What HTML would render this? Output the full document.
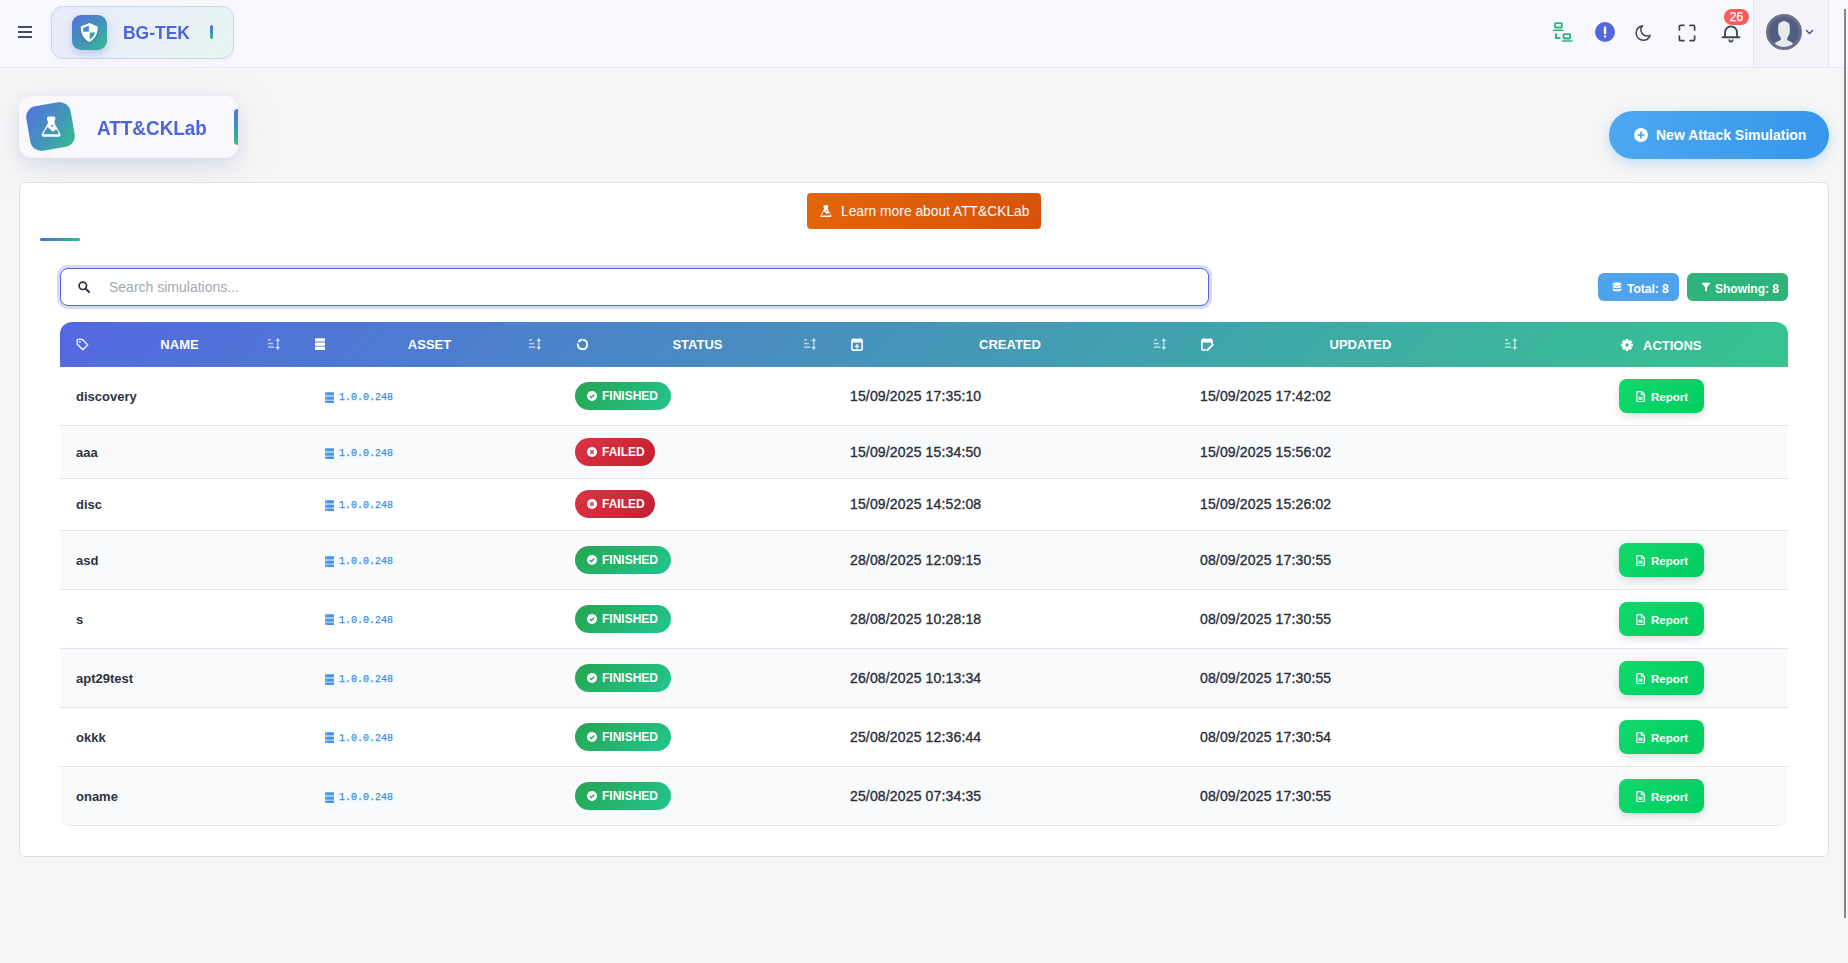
<!DOCTYPE html><html><head><meta charset="utf-8"><style>
*{box-sizing:border-box;margin:0;padding:0}
html,body{width:1848px;height:963px;overflow:hidden;background:#f6f6f6;font-family:"Liberation Sans",sans-serif;color:#333}
.a{position:absolute}
svg{display:block}
#nav{left:0;top:0;width:1848px;height:68px;background:#f9f8fe;border-bottom:1px solid #e8e8ee}
#ham i{position:absolute;left:18px;width:14px;height:2px;background:#454a5c}
#logo{left:51px;top:6px;width:183px;height:53px;border:1px solid #cdd5f5;border-radius:12px;background:linear-gradient(135deg,#e9ebfa 0%,#e8f1f6 60%,#e6f5f0 100%);box-shadow:0 1px 6px rgba(120,130,220,.08)}
#logoicon{left:20px;top:8px;width:35px;height:35px;border-radius:9px;background:linear-gradient(135deg,#5470e0 0%,#4496b8 55%,#33bf8c 100%);box-shadow:0 4px 9px rgba(84,104,224,.28)}
#logotext{left:71px;top:15px;font-size:18px;transform:scaleX(0.97);transform-origin:0 0;font-weight:bold;color:#4f64dc;line-height:22px;white-space:nowrap}
#logobar{left:158px;top:18px;width:3px;height:14px;border-radius:2px;background:linear-gradient(180deg,#4f6fe0,#33bb86)}
#userarea{left:1753px;top:0;width:76px;height:67px;background:#f4f4fa;border-left:1px solid #e6e6ee;border-right:1px solid #e6e6ee}
#badge26{left:1724px;top:9px;width:25px;height:16px;border-radius:8px;background:#fd5b5b;color:#fff;font-size:12px;line-height:17px;-webkit-text-stroke:0.25px #fff;text-align:center}
#scroll{left:1844px;top:9px;width:2px;height:909px;background:#858585}
#hdrcard{left:19px;top:96px;width:219px;height:62px;border-radius:13px;background:#f8f8fd;box-shadow:0 6px 16px rgba(90,100,210,.14),0 8px 50px rgba(110,110,170,.10);overflow:hidden}
#hdricon{left:9px;top:8px;width:45px;height:45px;border-radius:11px;transform:rotate(-10deg);background:linear-gradient(135deg,#5470e0 0%,#4496b8 55%,#33bf8c 100%)}
#hdrtext{left:78px;top:21px;font-size:20px;transform:scaleX(0.945);transform-origin:0 0;font-weight:bold;color:#4f64dc;line-height:22px;white-space:nowrap}
#hdrbar{left:215px;top:13px;width:8px;height:36px;border-radius:4px;background:linear-gradient(180deg,#4f6fe0,#33bb86)}
#newbtn{left:1609px;top:111px;width:220px;height:48px;border-radius:24px;background:linear-gradient(90deg,#4da8f1,#3696eb);box-shadow:0 4px 14px rgba(60,150,235,.28);color:#fff;font-weight:bold;font-size:14px;white-space:nowrap}
#card{left:19px;top:182px;width:1810px;height:675px;background:#fff;border:1px solid #e2e2e2;border-radius:6px}
#learn{left:807px;top:193px;width:234px;height:36px;border-radius:4px;background:linear-gradient(135deg,#e3660a,#d8510b);color:#fff;font-size:13.8px;white-space:nowrap}
#tabline{left:40px;top:238px;width:40px;height:3px;border-radius:2px;background:linear-gradient(90deg,#4a6be0,#33bb86)}
#search{left:60px;top:268px;width:1149px;height:38px;border:1px solid #4f66e0;border-radius:8px;background:#fff;box-shadow:0 0 0 3px #d6dcf7}
#ph{left:48px;top:10px;font-size:14px;color:#a3a8b5;line-height:17px;white-space:nowrap}
.pill{height:28px;border-radius:6px;color:#fff;font-weight:bold;font-size:12px;white-space:nowrap;line-height:14px}
#thead{left:60px;top:322px;width:1728px;height:45px;border-radius:12px 12px 0 0;background:linear-gradient(135deg,#5468e2 0%,#36c48f 100%)}
.th{color:#fff;font-size:13px;font-weight:bold;line-height:15px;white-space:nowrap;text-align:center}
.row{left:60px;width:1728px;border-bottom:1px solid #e5e6ec}
.alt{background:#f9fafc}
.nm{font-size:13px;font-weight:bold;color:#2f3340;line-height:15px;white-space:nowrap}
.dt{font-size:14px;color:#2b2f3a;line-height:16px;white-space:nowrap;-webkit-text-stroke:0.35px #2b2f3a;letter-spacing:0.15px}
.ip{font-family:"Liberation Mono",monospace;font-size:10px;color:#3a90e6;line-height:12px;white-space:nowrap;-webkit-text-stroke:0.25px #3a90e6}
.st{height:28px;border-radius:14px;color:#fff;font-weight:bold;font-size:12px;line-height:14px;white-space:nowrap}
.fin{background:linear-gradient(135deg,#25a550,#22c68f)}
.fail{background:linear-gradient(135deg,#dc3545,#c41f30)}
.rep{left:1619px;width:85px;height:34px;border-radius:8px;background:linear-gradient(135deg,#10d96c,#03cd60);box-shadow:0 3px 8px rgba(0,0,0,.14);color:#fff;font-weight:bold;font-size:12px;line-height:14px}
</style></head><body>
<div id="nav" class="a">
<div id="ham"><i style="top:26px"></i><i style="top:31px"></i><i style="top:36px"></i></div>
<div id="logo" class="a"><div id="logoicon" class="a"><svg width="35" height="35" viewBox="0 0 35 35" style="position:absolute;left:0;top:0;filter:drop-shadow(0 1.5px 1.5px rgba(0,40,60,.25))"><path d="M17.3 7.9 L25.8 11.5 C25.8 19.5 22.6 24.4 17.3 27 C12 24.4 8.8 19.5 8.8 11.5 Z" fill="#fff"/><path d="M16.9 10.7 L16.9 16.8 L11.2 16.8 C11.1 15.5 11.05 14.3 11.05 13.1 Z" fill="#4a8cc4"/><path d="M17.7 17.6 L23.1 17.6 C22.4 20.7 20.6 23 17.7 24.5 Z" fill="#3fa3a6"/></svg></div><div id="logotext" class="a">BG-TEK</div><div id="logobar" class="a"></div></div>
<div id="userarea" class="a"></div>
<div class="a" style="left:1552px;top:21px"><svg width="21" height="21" viewBox="0 0 21 21" ><rect x="3" y="2.2" width="6.8" height="4.3" rx="0.5" fill="none" stroke="#2fb57a" stroke-width="1.8"/><rect x="0.9" y="8.5" width="10.6" height="1.6" rx="0.4" fill="#2fb57a"/><rect x="11.6" y="13.2" width="6.6" height="4.3" rx="0.5" fill="none" stroke="#2fb57a" stroke-width="1.8"/><rect x="10" y="19.2" width="10.6" height="1.6" rx="0.4" fill="#2fb57a"/><path d="M4 12.3 L4 17 L8.5 17" fill="none" stroke="#2fb57a" stroke-width="2"/></svg></div>
<div class="a" style="left:1595px;top:22px"><svg width="20" height="20" viewBox="0 0 20 20" ><circle cx="10" cy="10" r="10" fill="#5567e0"/><rect x="8.9" y="4.6" width="2.3" height="7.6" rx="0.4" fill="#fff"/><rect x="8.9" y="13.4" width="2.3" height="2.2" rx="0.4" fill="#fff"/></svg></div>
<div class="a" style="left:1634px;top:24px"><svg width="18" height="18" viewBox="0 0 18 18" ><path d="M8.6 1.8 C5.1 2.6 2.2 5.4 2.2 9.3 C2.2 13.2 5.4 16.3 9.3 16.3 C12.6 16.3 15.2 14.2 16.1 11.3 C15.2 11.8 14.2 12 13.2 12 C9.6 12 6.8 9.1 6.8 5.6 C6.8 4.1 7.4 2.8 8.6 1.8 Z" fill="none" stroke="#3f4456" stroke-width="1.5" stroke-linejoin="round"/></svg></div>
<div class="a" style="left:1678px;top:24px"><svg width="18" height="18" viewBox="0 0 18 18" ><path d="M1.4 6 L1.4 2.4 C1.4 1.8 1.8 1.4 2.4 1.4 L6 1.4 M12 1.4 L15.6 1.4 C16.2 1.4 16.6 1.8 16.6 2.4 L16.6 6 M16.6 12 L16.6 15.6 C16.6 16.2 16.2 16.6 15.6 16.6 L12 16.6 M6 16.6 L2.4 16.6 C1.8 16.6 1.4 16.2 1.4 15.6 L1.4 12" fill="none" stroke="#3f4456" stroke-width="1.7" stroke-linecap="round"/></svg></div>
<div class="a" style="left:1721px;top:24px"><svg width="20" height="20" viewBox="0 0 20 20" ><path d="M4 12.8 L4 8.6 C4 5.2 6.6 2.4 10 2.4 C13.4 2.4 16 5.2 16 8.6 L16 12.8" fill="none" stroke="#3f4456" stroke-width="1.8"/><path d="M1.6 13.2 L18.4 13.2" stroke="#3f4456" stroke-width="1.9" stroke-linecap="round"/><path d="M8.2 16 C8.4 17.2 9.2 17.6 10 17.6 C10.8 17.6 11.6 17.2 11.8 16" fill="none" stroke="#3f4456" stroke-width="1.6" stroke-linecap="round"/></svg></div>
<div id="badge26" class="a">26</div>
<div class="a" style="left:1766px;top:14px"><svg width="36" height="36" viewBox="0 0 36 36" ><circle cx="18" cy="18" r="18" fill="#6e7089"/><circle cx="18" cy="18" r="15" fill="#525f85"/><clipPath id="avc"><circle cx="18" cy="18" r="15"/></clipPath><path clip-path="url(#avc)" d="M18 7.2 C21.4 7.2 23.8 9.4 23.8 12.9 L23.8 17.6 C23.8 20.2 22.6 22.4 21.2 23.9 L21.2 25.9 C23.6 27.2 26 28.2 27.4 29.5 C24.6 32.2 21.5 33.6 18 33.6 C14.5 33.6 11.4 32.2 8.6 29.5 C10 28.2 12.4 27.2 14.8 25.9 L14.8 23.9 C13.4 22.4 12.2 20.2 12.2 17.6 L12.2 12.9 C12.2 9.4 14.6 7.2 18 7.2 Z" fill="#e5eaeb"/></svg></div>
<div class="a" style="left:1805px;top:29px"><svg width="9" height="6" viewBox="0 0 9 6" ><path d="M1 1 L4.5 4.5 L8 1" fill="none" stroke="#3b4a78" stroke-width="1.3"/></svg></div>
</div>
<div id="hdrcard" class="a"><div id="hdricon" class="a"></div><div class="a" style="left:22px;top:20px"><svg width="20.3" height="21" viewBox="0 0 20.3 21"><path d="M5.9 2.4 C5.9 1 7 0.4 8.1 0.4 L12.2 0.4 C13.3 0.4 14.4 1 14.4 2.4 C14.4 3.8 13.5 4.7 13.5 4.7 L13.5 7.4 L19.3 17.8 C20.1 19.3 19.3 20.7 17.6 20.7 L2.7 20.7 C1 20.7 0.2 19.3 1 17.8 L6.8 7.4 L6.8 4.7 C6.8 4.7 5.9 3.8 5.9 2.4 Z" fill="#fff"/><path d="M6.5 10.9 L12 15.8 L14.9 13.4 L15.9 13.8 L17.4 16.8 C17.8 17.7 17.4 18.3 16.5 18.3 L3.8 18.3 C2.9 18.3 2.5 17.7 2.9 16.8 Z" fill="#4597b6"/><circle cx="11.2" cy="9.8" r="1.1" fill="#4597b6"/></svg></div><div id="hdrtext" class="a">ATT&amp;CKLab</div><div id="hdrbar" class="a"></div></div>
<div id="newbtn" class="a"><div class="a" style="left:25px;top:17px"><svg width="14" height="14" viewBox="0 0 14 14" ><circle cx="7" cy="7" r="7" fill="#fff"/><path d="M7 3.6 L7 10.4 M3.6 7 L10.4 7" stroke="#45a0ee" stroke-width="1.6"/></svg></div><div class="a" style="left:47px;top:16px;line-height:16px">New Attack Simulation</div></div>
<div id="card" class="a"></div>
<div id="learn" class="a"><div class="a" style="left:13px;top:12px"><svg width="11.8" height="12.2" viewBox="0 0 20.3 21"><path d="M5.9 2.4 C5.9 1 7 0.4 8.1 0.4 L12.2 0.4 C13.3 0.4 14.4 1 14.4 2.4 C14.4 3.8 13.5 4.7 13.5 4.7 L13.5 7.4 L19.3 17.8 C20.1 19.3 19.3 20.7 17.6 20.7 L2.7 20.7 C1 20.7 0.2 19.3 1 17.8 L6.8 7.4 L6.8 4.7 C6.8 4.7 5.9 3.8 5.9 2.4 Z" fill="#fff"/><path d="M6.5 10.9 L12 15.8 L14.9 13.4 L15.9 13.8 L17.4 16.8 C17.8 17.7 17.4 18.3 16.5 18.3 L3.8 18.3 C2.9 18.3 2.5 17.7 2.9 16.8 Z" fill="#e05c08"/><circle cx="11.2" cy="9.8" r="1.1" fill="#e05c08"/></svg></div><div class="a" style="left:34px;top:11px;line-height:16px">Learn more about ATT&amp;CKLab</div></div>
<div id="tabline" class="a"></div>
<div id="search" class="a"><div class="a" style="left:17px;top:12px"><svg width="12" height="12" viewBox="0 0 12 12" ><circle cx="4.8" cy="4.8" r="3.7" fill="none" stroke="#2d3142" stroke-width="1.7"/><path d="M7.6 7.6 L11 11" stroke="#2d3142" stroke-width="2" stroke-linecap="round"/></svg></div><div id="ph" class="a">Search simulations...</div></div>
<div class="a pill" style="left:1598px;top:273px;width:81px;background:#4ea3ec"><div class="a" style="left:14px;top:9px"><svg width="10" height="10" viewBox="0 0 10 10" ><ellipse cx="5" cy="2" rx="4.3" ry="1.8" fill="#fff"/><path d="M0.7 3.3 C1.5 4.8 8.5 4.8 9.3 3.3 L9.3 5 C8.5 6.5 1.5 6.5 0.7 5 Z" fill="#fff"/><path d="M0.7 6.3 C1.5 7.8 8.5 7.8 9.3 6.3 L9.3 8 C8.5 9.8 1.5 9.8 0.7 8 Z" fill="#fff"/></svg></div><div class="a" style="left:29px;top:9px">Total: 8</div></div>
<div class="a pill" style="left:1687px;top:273px;width:101px;background:#2eb47a"><div class="a" style="left:14px;top:9px"><svg width="10" height="10" viewBox="0 0 10 10" ><path d="M0.3 0.8 L9.7 0.8 L6 5.2 L6 9.6 L4 8.4 L4 5.2 Z" fill="#fff"/></svg></div><div class="a" style="left:28px;top:9px">Showing: 8</div></div>
<div id="thead" class="a"></div>
<div class="a" style="left:76px;top:338px"><svg width="13" height="13" viewBox="0 0 13 13" ><path d="M1.3 1.8 C1.3 1.5 1.5 1.3 1.8 1.3 L6.2 1.3 L11.8 6.9 L6.9 11.8 L1.3 6.2 Z" fill="none" stroke="#fff" stroke-width="1.3" stroke-linejoin="round"/><circle cx="3.9" cy="3.9" r="0.9" fill="#fff"/></svg></div>
<div class="a th" style="left:60px;top:337px;width:239px">NAME</div>
<div class="a" style="left:268px;top:338px"><svg width="13" height="12" viewBox="0 0 13 12" ><g fill="rgba(255,255,255,.62)"><rect x="0" y="1.1" width="3" height="1.5"/><rect x="0" y="4.8" width="5" height="1.5"/><rect x="0" y="8.4" width="6.3" height="1.5"/><rect x="9" y="1.5" width="1.5" height="9"/><path d="M7.2 3 L9.75 0 L12.3 3 Z"/><path d="M7.2 9 L9.75 12 L12.3 9 Z"/></g></svg></div>
<div class="a" style="left:315px;top:338px"><svg width="10" height="12" viewBox="0 0 10 12" ><rect x="0" y="0.2" width="10" height="3.3" rx="0.5" fill="#fff"/><rect x="0" y="4.4" width="10" height="3.3" rx="0.5" fill="#fff"/><rect x="0" y="8.6" width="10" height="3.3" rx="0.5" fill="#fff"/><circle cx="1.6" cy="1.85" r="0.5" fill="rgba(255,255,255,.7)"/><circle cx="1.6" cy="6.05" r="0.5" fill="rgba(255,255,255,.7)"/><circle cx="1.6" cy="10.25" r="0.5" fill="rgba(255,255,255,.7)"/></svg></div>
<div class="a th" style="left:299px;top:337px;width:261px">ASSET</div>
<div class="a" style="left:529px;top:338px"><svg width="13" height="12" viewBox="0 0 13 12" ><g fill="rgba(255,255,255,.62)"><rect x="0" y="1.1" width="3" height="1.5"/><rect x="0" y="4.8" width="5" height="1.5"/><rect x="0" y="8.4" width="6.3" height="1.5"/><rect x="9" y="1.5" width="1.5" height="9"/><path d="M7.2 3 L9.75 0 L12.3 3 Z"/><path d="M7.2 9 L9.75 12 L12.3 9 Z"/></g></svg></div>
<div class="a" style="left:576px;top:338px"><svg width="13" height="13" viewBox="0 0 13 13" ><circle cx="6.5" cy="6.5" r="4.7" fill="none" stroke="#fff" stroke-width="2" stroke-dasharray="22.5 1.5 4 1.5" transform="rotate(-88 6.5 6.5)"/></svg></div>
<div class="a th" style="left:560px;top:337px;width:275px">STATUS</div>
<div class="a" style="left:804px;top:338px"><svg width="13" height="12" viewBox="0 0 13 12" ><g fill="rgba(255,255,255,.62)"><rect x="0" y="1.1" width="3" height="1.5"/><rect x="0" y="4.8" width="5" height="1.5"/><rect x="0" y="8.4" width="6.3" height="1.5"/><rect x="9" y="1.5" width="1.5" height="9"/><path d="M7.2 3 L9.75 0 L12.3 3 Z"/><path d="M7.2 9 L9.75 12 L12.3 9 Z"/></g></svg></div>
<div class="a" style="left:851px;top:338px"><svg width="12" height="13" viewBox="0 0 12 13" ><path d="M3 0.3 L3 2 M9 0.3 L9 2" stroke="#fff" stroke-width="1.5"/><rect x="0.9" y="1.5" width="10.2" height="10.6" rx="1" fill="none" stroke="#fff" stroke-width="1.6"/><rect x="0.9" y="1.5" width="10.2" height="3" fill="#fff"/><path d="M6 6.3 L6 10.4 M3.9 8.35 L8.1 8.35" stroke="#fff" stroke-width="1.4"/></svg></div>
<div class="a th" style="left:835px;top:337px;width:350px">CREATED</div>
<div class="a" style="left:1154px;top:338px"><svg width="13" height="12" viewBox="0 0 13 12" ><g fill="rgba(255,255,255,.62)"><rect x="0" y="1.1" width="3" height="1.5"/><rect x="0" y="4.8" width="5" height="1.5"/><rect x="0" y="8.4" width="6.3" height="1.5"/><rect x="9" y="1.5" width="1.5" height="9"/><path d="M7.2 3 L9.75 0 L12.3 3 Z"/><path d="M7.2 9 L9.75 12 L12.3 9 Z"/></g></svg></div>
<div class="a" style="left:1201px;top:338px"><svg width="13" height="13" viewBox="0 0 13 13" ><path d="M3 0.3 L3 2 M9 0.3 L9 2" stroke="#fff" stroke-width="1.5"/><path d="M5.4 12 L1.8 12 C1.3 12 0.9 11.6 0.9 11.1 L0.9 2.4 C0.9 1.9 1.3 1.5 1.8 1.5 L10.2 1.5 C10.7 1.5 11.1 1.9 11.1 2.4 L11.1 6" fill="none" stroke="#fff" stroke-width="1.6"/><rect x="0.9" y="1.5" width="10.2" height="3" fill="#fff"/><path d="M6.5 12 L11.8 6.6" stroke="#fff" stroke-width="1.8" stroke-linecap="round"/></svg></div>
<div class="a th" style="left:1185px;top:337px;width:351px">UPDATED</div>
<div class="a" style="left:1505px;top:338px"><svg width="13" height="12" viewBox="0 0 13 12" ><g fill="rgba(255,255,255,.62)"><rect x="0" y="1.1" width="3" height="1.5"/><rect x="0" y="4.8" width="5" height="1.5"/><rect x="0" y="8.4" width="6.3" height="1.5"/><rect x="9" y="1.5" width="1.5" height="9"/><path d="M7.2 3 L9.75 0 L12.3 3 Z"/><path d="M7.2 9 L9.75 12 L12.3 9 Z"/></g></svg></div>
<div class="a" style="left:1621px;top:339px"><svg width="12" height="12" viewBox="0 0 12 12" ><g fill="#fff" transform="translate(6 6)"><rect x="-1.4" y="-5.9" width="2.8" height="3" rx="0.5" transform="rotate(0)"/><rect x="-1.4" y="-5.9" width="2.8" height="3" rx="0.5" transform="rotate(45)"/><rect x="-1.4" y="-5.9" width="2.8" height="3" rx="0.5" transform="rotate(90)"/><rect x="-1.4" y="-5.9" width="2.8" height="3" rx="0.5" transform="rotate(135)"/><rect x="-1.4" y="-5.9" width="2.8" height="3" rx="0.5" transform="rotate(180)"/><rect x="-1.4" y="-5.9" width="2.8" height="3" rx="0.5" transform="rotate(225)"/><rect x="-1.4" y="-5.9" width="2.8" height="3" rx="0.5" transform="rotate(270)"/><rect x="-1.4" y="-5.9" width="2.8" height="3" rx="0.5" transform="rotate(315)"/><circle r="4" fill="#fff"/></g><circle cx="6" cy="6" r="1.7" fill="#39b59a"/></svg></div>
<div class="a th" style="left:1643px;top:338px">ACTIONS</div>
<div class="a row" style="top:367px;height:59px;"></div>
<div class="a nm" style="left:76px;top:389px">discovery</div>
<div class="a" style="left:325px;top:392px"><svg width="9" height="11" viewBox="0 0 9 11" ><rect x="0" y="0.2" width="9" height="3.3" rx="0.5" fill="#4396ea"/><rect x="0" y="4.4" width="9" height="3.3" rx="0.5" fill="#4396ea"/><rect x="0" y="8.6" width="9" height="3.3" rx="0.5" fill="#4396ea"/><circle cx="1.6" cy="1.85" r="0.5" fill="rgba(255,255,255,.7)"/><circle cx="1.6" cy="6.05" r="0.5" fill="rgba(255,255,255,.7)"/><circle cx="1.6" cy="10.25" r="0.5" fill="rgba(255,255,255,.7)"/></svg></div>
<div class="a ip" style="left:339px;top:392px">1.0.0.248</div>
<div class="a st fin" style="left:575px;top:382px;width:96px"><div class="a" style="left:12px;top:9px"><svg width="10" height="10" viewBox="0 0 10 10" ><circle cx="5" cy="5" r="5" fill="#fff"/><path d="M2.8 5.1 L4.4 6.6 L7.3 3.6" fill="none" stroke="#25ae5f" stroke-width="1.4"/></svg></div><div class="a" style="left:27px;top:7px">FINISHED</div></div>
<div class="a dt" style="left:850px;top:388px">15/09/2025 17:35:10</div>
<div class="a dt" style="left:1200px;top:388px">15/09/2025 17:42:02</div>
<div class="a rep" style="top:379px"><div class="a" style="left:17px;top:12px"><svg width="9" height="11" viewBox="0 0 9 11" ><path d="M0.8 1.3 C0.8 0.9 1.1 0.6 1.5 0.6 L5.6 0.6 L8.3 3.3 L8.3 9.8 C8.3 10.2 8 10.5 7.6 10.5 L1.5 10.5 C1.1 10.5 0.8 10.2 0.8 9.8 Z" fill="none" stroke="#fff" stroke-width="1.2"/><path d="M5.4 0.6 L5.4 3.5 L8.3 3.5" fill="none" stroke="#fff" stroke-width="1.1"/><rect x="2.4" y="5.6" width="4.2" height="3.2" fill="rgba(255,255,255,.75)"/></svg></div><div class="a" style="left:32px;top:11px;font-size:11.5px">Report</div></div>
<div class="a row alt" style="top:426px;height:53px;"></div>
<div class="a nm" style="left:76px;top:445px">aaa</div>
<div class="a" style="left:325px;top:448px"><svg width="9" height="11" viewBox="0 0 9 11" ><rect x="0" y="0.2" width="9" height="3.3" rx="0.5" fill="#4396ea"/><rect x="0" y="4.4" width="9" height="3.3" rx="0.5" fill="#4396ea"/><rect x="0" y="8.6" width="9" height="3.3" rx="0.5" fill="#4396ea"/><circle cx="1.6" cy="1.85" r="0.5" fill="rgba(255,255,255,.7)"/><circle cx="1.6" cy="6.05" r="0.5" fill="rgba(255,255,255,.7)"/><circle cx="1.6" cy="10.25" r="0.5" fill="rgba(255,255,255,.7)"/></svg></div>
<div class="a ip" style="left:339px;top:448px">1.0.0.248</div>
<div class="a st fail" style="left:575px;top:438px;width:80px"><div class="a" style="left:12px;top:9px"><svg width="10" height="10" viewBox="0 0 10 10" ><circle cx="5" cy="5" r="5" fill="#fff"/><path d="M3.3 3.3 L6.7 6.7 M6.7 3.3 L3.3 6.7" stroke="#d32f3f" stroke-width="1.3"/></svg></div><div class="a" style="left:27px;top:7px">FAILED</div></div>
<div class="a dt" style="left:850px;top:444px">15/09/2025 15:34:50</div>
<div class="a dt" style="left:1200px;top:444px">15/09/2025 15:56:02</div>
<div class="a row" style="top:479px;height:52px;"></div>
<div class="a nm" style="left:76px;top:497px">disc</div>
<div class="a" style="left:325px;top:500px"><svg width="9" height="11" viewBox="0 0 9 11" ><rect x="0" y="0.2" width="9" height="3.3" rx="0.5" fill="#4396ea"/><rect x="0" y="4.4" width="9" height="3.3" rx="0.5" fill="#4396ea"/><rect x="0" y="8.6" width="9" height="3.3" rx="0.5" fill="#4396ea"/><circle cx="1.6" cy="1.85" r="0.5" fill="rgba(255,255,255,.7)"/><circle cx="1.6" cy="6.05" r="0.5" fill="rgba(255,255,255,.7)"/><circle cx="1.6" cy="10.25" r="0.5" fill="rgba(255,255,255,.7)"/></svg></div>
<div class="a ip" style="left:339px;top:500px">1.0.0.248</div>
<div class="a st fail" style="left:575px;top:490px;width:80px"><div class="a" style="left:12px;top:9px"><svg width="10" height="10" viewBox="0 0 10 10" ><circle cx="5" cy="5" r="5" fill="#fff"/><path d="M3.3 3.3 L6.7 6.7 M6.7 3.3 L3.3 6.7" stroke="#d32f3f" stroke-width="1.3"/></svg></div><div class="a" style="left:27px;top:7px">FAILED</div></div>
<div class="a dt" style="left:850px;top:496px">15/09/2025 14:52:08</div>
<div class="a dt" style="left:1200px;top:496px">15/09/2025 15:26:02</div>
<div class="a row alt" style="top:531px;height:59px;"></div>
<div class="a nm" style="left:76px;top:553px">asd</div>
<div class="a" style="left:325px;top:556px"><svg width="9" height="11" viewBox="0 0 9 11" ><rect x="0" y="0.2" width="9" height="3.3" rx="0.5" fill="#4396ea"/><rect x="0" y="4.4" width="9" height="3.3" rx="0.5" fill="#4396ea"/><rect x="0" y="8.6" width="9" height="3.3" rx="0.5" fill="#4396ea"/><circle cx="1.6" cy="1.85" r="0.5" fill="rgba(255,255,255,.7)"/><circle cx="1.6" cy="6.05" r="0.5" fill="rgba(255,255,255,.7)"/><circle cx="1.6" cy="10.25" r="0.5" fill="rgba(255,255,255,.7)"/></svg></div>
<div class="a ip" style="left:339px;top:556px">1.0.0.248</div>
<div class="a st fin" style="left:575px;top:546px;width:96px"><div class="a" style="left:12px;top:9px"><svg width="10" height="10" viewBox="0 0 10 10" ><circle cx="5" cy="5" r="5" fill="#fff"/><path d="M2.8 5.1 L4.4 6.6 L7.3 3.6" fill="none" stroke="#25ae5f" stroke-width="1.4"/></svg></div><div class="a" style="left:27px;top:7px">FINISHED</div></div>
<div class="a dt" style="left:850px;top:552px">28/08/2025 12:09:15</div>
<div class="a dt" style="left:1200px;top:552px">08/09/2025 17:30:55</div>
<div class="a rep" style="top:543px"><div class="a" style="left:17px;top:12px"><svg width="9" height="11" viewBox="0 0 9 11" ><path d="M0.8 1.3 C0.8 0.9 1.1 0.6 1.5 0.6 L5.6 0.6 L8.3 3.3 L8.3 9.8 C8.3 10.2 8 10.5 7.6 10.5 L1.5 10.5 C1.1 10.5 0.8 10.2 0.8 9.8 Z" fill="none" stroke="#fff" stroke-width="1.2"/><path d="M5.4 0.6 L5.4 3.5 L8.3 3.5" fill="none" stroke="#fff" stroke-width="1.1"/><rect x="2.4" y="5.6" width="4.2" height="3.2" fill="rgba(255,255,255,.75)"/></svg></div><div class="a" style="left:32px;top:11px;font-size:11.5px">Report</div></div>
<div class="a row" style="top:590px;height:59px;"></div>
<div class="a nm" style="left:76px;top:612px">s</div>
<div class="a" style="left:325px;top:614px"><svg width="9" height="11" viewBox="0 0 9 11" ><rect x="0" y="0.2" width="9" height="3.3" rx="0.5" fill="#4396ea"/><rect x="0" y="4.4" width="9" height="3.3" rx="0.5" fill="#4396ea"/><rect x="0" y="8.6" width="9" height="3.3" rx="0.5" fill="#4396ea"/><circle cx="1.6" cy="1.85" r="0.5" fill="rgba(255,255,255,.7)"/><circle cx="1.6" cy="6.05" r="0.5" fill="rgba(255,255,255,.7)"/><circle cx="1.6" cy="10.25" r="0.5" fill="rgba(255,255,255,.7)"/></svg></div>
<div class="a ip" style="left:339px;top:615px">1.0.0.248</div>
<div class="a st fin" style="left:575px;top:605px;width:96px"><div class="a" style="left:12px;top:9px"><svg width="10" height="10" viewBox="0 0 10 10" ><circle cx="5" cy="5" r="5" fill="#fff"/><path d="M2.8 5.1 L4.4 6.6 L7.3 3.6" fill="none" stroke="#25ae5f" stroke-width="1.4"/></svg></div><div class="a" style="left:27px;top:7px">FINISHED</div></div>
<div class="a dt" style="left:850px;top:611px">28/08/2025 10:28:18</div>
<div class="a dt" style="left:1200px;top:611px">08/09/2025 17:30:55</div>
<div class="a rep" style="top:602px"><div class="a" style="left:17px;top:12px"><svg width="9" height="11" viewBox="0 0 9 11" ><path d="M0.8 1.3 C0.8 0.9 1.1 0.6 1.5 0.6 L5.6 0.6 L8.3 3.3 L8.3 9.8 C8.3 10.2 8 10.5 7.6 10.5 L1.5 10.5 C1.1 10.5 0.8 10.2 0.8 9.8 Z" fill="none" stroke="#fff" stroke-width="1.2"/><path d="M5.4 0.6 L5.4 3.5 L8.3 3.5" fill="none" stroke="#fff" stroke-width="1.1"/><rect x="2.4" y="5.6" width="4.2" height="3.2" fill="rgba(255,255,255,.75)"/></svg></div><div class="a" style="left:32px;top:11px;font-size:11.5px">Report</div></div>
<div class="a row alt" style="top:649px;height:59px;"></div>
<div class="a nm" style="left:76px;top:671px">apt29test</div>
<div class="a" style="left:325px;top:674px"><svg width="9" height="11" viewBox="0 0 9 11" ><rect x="0" y="0.2" width="9" height="3.3" rx="0.5" fill="#4396ea"/><rect x="0" y="4.4" width="9" height="3.3" rx="0.5" fill="#4396ea"/><rect x="0" y="8.6" width="9" height="3.3" rx="0.5" fill="#4396ea"/><circle cx="1.6" cy="1.85" r="0.5" fill="rgba(255,255,255,.7)"/><circle cx="1.6" cy="6.05" r="0.5" fill="rgba(255,255,255,.7)"/><circle cx="1.6" cy="10.25" r="0.5" fill="rgba(255,255,255,.7)"/></svg></div>
<div class="a ip" style="left:339px;top:674px">1.0.0.248</div>
<div class="a st fin" style="left:575px;top:664px;width:96px"><div class="a" style="left:12px;top:9px"><svg width="10" height="10" viewBox="0 0 10 10" ><circle cx="5" cy="5" r="5" fill="#fff"/><path d="M2.8 5.1 L4.4 6.6 L7.3 3.6" fill="none" stroke="#25ae5f" stroke-width="1.4"/></svg></div><div class="a" style="left:27px;top:7px">FINISHED</div></div>
<div class="a dt" style="left:850px;top:670px">26/08/2025 10:13:34</div>
<div class="a dt" style="left:1200px;top:670px">08/09/2025 17:30:55</div>
<div class="a rep" style="top:661px"><div class="a" style="left:17px;top:12px"><svg width="9" height="11" viewBox="0 0 9 11" ><path d="M0.8 1.3 C0.8 0.9 1.1 0.6 1.5 0.6 L5.6 0.6 L8.3 3.3 L8.3 9.8 C8.3 10.2 8 10.5 7.6 10.5 L1.5 10.5 C1.1 10.5 0.8 10.2 0.8 9.8 Z" fill="none" stroke="#fff" stroke-width="1.2"/><path d="M5.4 0.6 L5.4 3.5 L8.3 3.5" fill="none" stroke="#fff" stroke-width="1.1"/><rect x="2.4" y="5.6" width="4.2" height="3.2" fill="rgba(255,255,255,.75)"/></svg></div><div class="a" style="left:32px;top:11px;font-size:11.5px">Report</div></div>
<div class="a row" style="top:708px;height:59px;"></div>
<div class="a nm" style="left:76px;top:730px">okkk</div>
<div class="a" style="left:325px;top:732px"><svg width="9" height="11" viewBox="0 0 9 11" ><rect x="0" y="0.2" width="9" height="3.3" rx="0.5" fill="#4396ea"/><rect x="0" y="4.4" width="9" height="3.3" rx="0.5" fill="#4396ea"/><rect x="0" y="8.6" width="9" height="3.3" rx="0.5" fill="#4396ea"/><circle cx="1.6" cy="1.85" r="0.5" fill="rgba(255,255,255,.7)"/><circle cx="1.6" cy="6.05" r="0.5" fill="rgba(255,255,255,.7)"/><circle cx="1.6" cy="10.25" r="0.5" fill="rgba(255,255,255,.7)"/></svg></div>
<div class="a ip" style="left:339px;top:733px">1.0.0.248</div>
<div class="a st fin" style="left:575px;top:723px;width:96px"><div class="a" style="left:12px;top:9px"><svg width="10" height="10" viewBox="0 0 10 10" ><circle cx="5" cy="5" r="5" fill="#fff"/><path d="M2.8 5.1 L4.4 6.6 L7.3 3.6" fill="none" stroke="#25ae5f" stroke-width="1.4"/></svg></div><div class="a" style="left:27px;top:7px">FINISHED</div></div>
<div class="a dt" style="left:850px;top:729px">25/08/2025 12:36:44</div>
<div class="a dt" style="left:1200px;top:729px">08/09/2025 17:30:54</div>
<div class="a rep" style="top:720px"><div class="a" style="left:17px;top:12px"><svg width="9" height="11" viewBox="0 0 9 11" ><path d="M0.8 1.3 C0.8 0.9 1.1 0.6 1.5 0.6 L5.6 0.6 L8.3 3.3 L8.3 9.8 C8.3 10.2 8 10.5 7.6 10.5 L1.5 10.5 C1.1 10.5 0.8 10.2 0.8 9.8 Z" fill="none" stroke="#fff" stroke-width="1.2"/><path d="M5.4 0.6 L5.4 3.5 L8.3 3.5" fill="none" stroke="#fff" stroke-width="1.1"/><rect x="2.4" y="5.6" width="4.2" height="3.2" fill="rgba(255,255,255,.75)"/></svg></div><div class="a" style="left:32px;top:11px;font-size:11.5px">Report</div></div>
<div class="a row alt" style="top:767px;height:59px;border-radius:0 0 12px 12px;"></div>
<div class="a nm" style="left:76px;top:789px">oname</div>
<div class="a" style="left:325px;top:792px"><svg width="9" height="11" viewBox="0 0 9 11" ><rect x="0" y="0.2" width="9" height="3.3" rx="0.5" fill="#4396ea"/><rect x="0" y="4.4" width="9" height="3.3" rx="0.5" fill="#4396ea"/><rect x="0" y="8.6" width="9" height="3.3" rx="0.5" fill="#4396ea"/><circle cx="1.6" cy="1.85" r="0.5" fill="rgba(255,255,255,.7)"/><circle cx="1.6" cy="6.05" r="0.5" fill="rgba(255,255,255,.7)"/><circle cx="1.6" cy="10.25" r="0.5" fill="rgba(255,255,255,.7)"/></svg></div>
<div class="a ip" style="left:339px;top:792px">1.0.0.248</div>
<div class="a st fin" style="left:575px;top:782px;width:96px"><div class="a" style="left:12px;top:9px"><svg width="10" height="10" viewBox="0 0 10 10" ><circle cx="5" cy="5" r="5" fill="#fff"/><path d="M2.8 5.1 L4.4 6.6 L7.3 3.6" fill="none" stroke="#25ae5f" stroke-width="1.4"/></svg></div><div class="a" style="left:27px;top:7px">FINISHED</div></div>
<div class="a dt" style="left:850px;top:788px">25/08/2025 07:34:35</div>
<div class="a dt" style="left:1200px;top:788px">08/09/2025 17:30:55</div>
<div class="a rep" style="top:779px"><div class="a" style="left:17px;top:12px"><svg width="9" height="11" viewBox="0 0 9 11" ><path d="M0.8 1.3 C0.8 0.9 1.1 0.6 1.5 0.6 L5.6 0.6 L8.3 3.3 L8.3 9.8 C8.3 10.2 8 10.5 7.6 10.5 L1.5 10.5 C1.1 10.5 0.8 10.2 0.8 9.8 Z" fill="none" stroke="#fff" stroke-width="1.2"/><path d="M5.4 0.6 L5.4 3.5 L8.3 3.5" fill="none" stroke="#fff" stroke-width="1.1"/><rect x="2.4" y="5.6" width="4.2" height="3.2" fill="rgba(255,255,255,.75)"/></svg></div><div class="a" style="left:32px;top:11px;font-size:11.5px">Report</div></div>
<div id="scroll" class="a"></div>
</body></html>
